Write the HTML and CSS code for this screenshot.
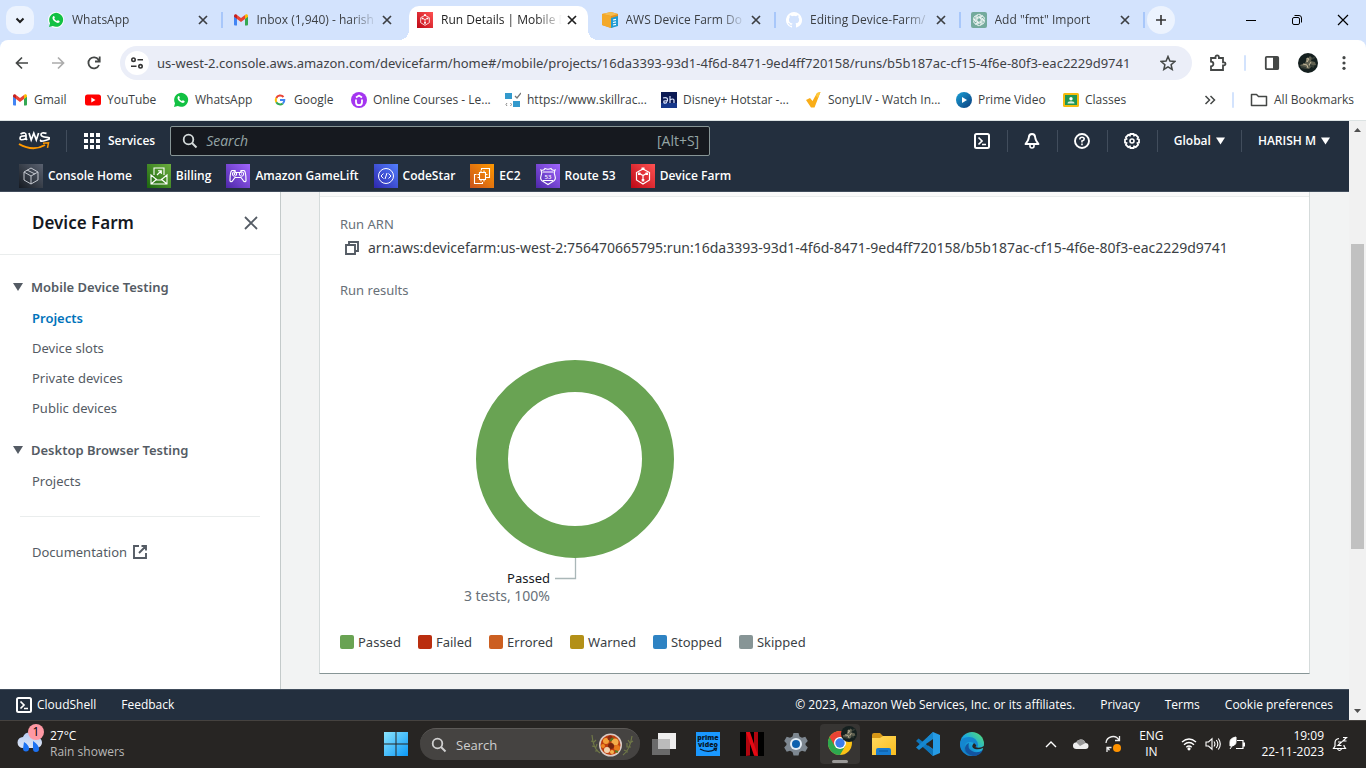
FILE: index.html
```html
<!DOCTYPE html>
<html lang="en">
<head>
<meta charset="utf-8">
<meta name="viewport" content="width=device-width, initial-scale=1">
<title>Run Details | Mobile Device Testing</title>
<link rel="stylesheet" href="styles.css">
</head>
<body>
<svg class="defs" aria-hidden="true">
  <defs>
    <linearGradient id="gRed" x1="0" y1="1" x2="1" y2="0"><stop offset="0" stop-color="#bd0816"/><stop offset="1" stop-color="#ff5252"/></linearGradient>
    <linearGradient id="gPurple" x1="0" y1="1" x2="1" y2="0"><stop offset="0" stop-color="#4d27a8"/><stop offset="1" stop-color="#a166ff"/></linearGradient>
    <linearGradient id="gGreen" x1="0" y1="1" x2="1" y2="0"><stop offset="0" stop-color="#1b660f"/><stop offset="1" stop-color="#6cae3e"/></linearGradient>
    <linearGradient id="gBlue" x1="0" y1="1" x2="1" y2="0"><stop offset="0" stop-color="#2e27ad"/><stop offset="1" stop-color="#527fff"/></linearGradient>
    <linearGradient id="gOrange" x1="0" y1="1" x2="1" y2="0"><stop offset="0" stop-color="#c8511b"/><stop offset="1" stop-color="#f90"/></linearGradient>
    <linearGradient id="gDark" x1="0" y1="1" x2="1" y2="0"><stop offset="0" stop-color="#161b22"/><stop offset="1" stop-color="#5a6270"/></linearGradient>
    <linearGradient id="gWin" x1="0" y1="0" x2="1" y2="1"><stop offset="0" stop-color="#8ae4fd"/><stop offset="1" stop-color="#0b99f8"/></linearGradient>
    <linearGradient id="gEdge" x1="0" y1="1" x2="1" y2="0"><stop offset="0" stop-color="#0c59a4"/><stop offset=".5" stop-color="#1ba8e0"/><stop offset="1" stop-color="#5be46a"/></linearGradient>
    <linearGradient id="gFolder" x1="0" y1="0" x2="1" y2="1"><stop offset="0" stop-color="#ffd95e"/><stop offset="1" stop-color="#f9bd1f"/></linearGradient>
    <linearGradient id="gCloud" x1="0" y1="0" x2="0" y2="1"><stop offset="0" stop-color="#b5cdf5"/><stop offset="1" stop-color="#dde4f2"/></linearGradient>
    <linearGradient id="gPrime" x1="0" y1="0" x2="1" y2="1"><stop offset="0" stop-color="#1aa2d8"/><stop offset="1" stop-color="#0b3c7c"/></linearGradient>
    <symbol id="whatsapp" viewBox="0 0 16 16"><path d="M1 15l1-3.800A7 7 0 1 1 4.800 14z" fill="#12c143"/><path d="M5.200 4.200c.5-.5 1-.3 1.200.2l.4 1c.1.500-.4.800-.6 1.100.6 1.200 1.400 1.900 2.700 2.500.4-.3.700-1 1.200-.8l1.300.7c.5.300.2 1.200-.3 1.600-1 .8-2.700.3-4.300-.9-1.500-1.200-2.400-2.700-2.300-3.900 0-.6.300-1.100.7-1.500z" fill="#fff"/></symbol>
    <symbol id="gmail" viewBox="0 0 16 16"><path d="M1 4v8.500a1 1 0 0 0 1 1h2V6.500z" fill="#4285f4"/><path d="M15 4v8.500a1 1 0 0 1-1 1h-2V6.500z" fill="#34a853"/><path d="M12 3.500V7l3-2.200V4c0-1.500-1.700-2.200-2.700-1.300z" fill="#fbbc04"/><path d="M4 7V3l4 3 4-3v4l-4 3z" fill="#ea4335"/><path d="M1 4c0-1.500 1.700-2.200 2.700-1.300L4 3v4L1 4.800z" fill="#c5221f"/></symbol>
    <symbol id="close" viewBox="0 0 16 16"><path d="M4 4l8 8M12 4l-8 8" stroke="currentColor" stroke-width="1.700" fill="none"/></symbol>
    <symbol id="farm" viewBox="0 0 24 24"><path d="M0 0h24v24H0z" fill="url(#gRed)"/><path d="M12 5l6.500 3.500v7.500L12 20l-6.500-4V8.500zM8.500 9.500l3.500 2 3.500-2M12 11.500v4.500" fill="none" stroke="#fff" stroke-width="1.200"/><path d="M10.500 3.500h3v2.500h-3zM7 8.500h2.500v2.500H7zM14.500 8.500H17v2.500h-2.500zM10.700 15h2.600v2.500h-2.600z" fill="#fff"/></symbol>
    <symbol id="shell" viewBox="0 0 16 16"><rect x="1" y="1" width="14" height="14" rx="1.500" fill="none" stroke="currentColor" stroke-width="2"/><path d="M4.500 4.500L8 8l-3.500 3.500M8 11.500h4" fill="none" stroke="currentColor" stroke-width="1.700"/></symbol>
    <symbol id="avatar" viewBox="0 0 20 20"><circle cx="10" cy="10" r="10" fill="#15201f"/><path d="M2 12l5-2 2-4 3-3 2 2-1 3 4 1 1 3-4 1-3 3-5-1-3-1z" fill="#606151"/><path d="M9 5l2 1-2 3zM5 11l4 1 1 3M13 9l-2 3 3 1" stroke="#c3b79a" fill="none"/><path d="M3 14l5 1M14 6l3-2M12 12l4 2" stroke="#343c35" stroke-width="2"/></symbol>
    <symbol id="caret" viewBox="0 0 10 8"><path d="M0 0h10L5 8z" fill="currentColor"/></symbol>
    <symbol id="search" viewBox="0 0 16 16"><circle cx="6.500" cy="6.500" r="4.800" fill="none" stroke="currentColor" stroke-width="1.800"/><path d="M10 10l4.500 4.500" stroke="currentColor" stroke-width="2"/></symbol>
  </defs>
</svg>

<header class="browser">
  <div class="tabstrip">
    <button class="round-btn tab-search" aria-label="Search tabs"><svg viewBox="0 0 16 16" width="16" height="16"><path d="M4.500 6.500L8 10l3.500-3.500" fill="none" stroke="#1f1f1f" stroke-width="2"/></svg></button>
    <div class="tabs">
      <div class="tab"><div class="tab-body"><svg class="ic16"><circle cx="8" cy="8" r="8" fill="#fff"/><use href="#whatsapp"/></svg><span class="tab-title">WhatsApp</span><button class="tab-close" aria-label="Close WhatsApp"><svg class="ic16"><use href="#close"/></svg></button></div></div>
      <div class="tab no-sep"><div class="tab-body"><svg class="ic16"><use href="#gmail"/></svg><span class="tab-title">Inbox (1,940) - harish</span><button class="tab-close" aria-label="Close Inbox"><svg class="ic16"><use href="#close"/></svg></button></div></div>
      <div class="tab active no-sep"><div class="tab-body"><svg class="ic16"><use href="#farm"/></svg><span class="tab-title">Run Details | Mobile D</span><button class="tab-close" aria-label="Close Run Details"><svg class="ic16"><use href="#close"/></svg></button></div></div>
      <div class="tab"><div class="tab-body"><svg class="ic16" viewBox="0 0 16 16"><path d="M0 2l9-2 7 2v11l-7 3-9-3z" fill="#e8911c"/><path d="M0 2l9-2 7 2-7 2z" fill="#f6bd4f"/><path d="M9 4v12l-9-3V2z" fill="#f3a92a"/><path d="M9 6l7-2v10l-7 2z" fill="#1e9bd3"/><path d="M11 8l3-.6M11 10.500l3-.6M11 13l3-.6" stroke="#fff" stroke-width="1.200"/></svg><span class="tab-title">AWS Device Farm Do</span><button class="tab-close" aria-label="Close AWS Device Farm"><svg class="ic16"><use href="#close"/></svg></button></div></div>
      <div class="tab"><div class="tab-body"><svg class="ic16" viewBox="0 0 16 16"><path fill="#fff" d="M8 0a8 8 0 0 0-2.530 15.590c.4.070.55-.17.550-.38v-1.490c-2.010.37-2.530-.49-2.690-.94-.09-.23-.48-.94-.82-1.130-.28-.15-.68-.52-.01-.53.630-.01 1.080.580 1.230.820.720 1.210 1.870.870 2.330.660.070-.52.280-.87.510-1.070-1.780-.2-3.640-.89-3.640-3.950 0-.87.310-1.590.820-2.150-.08-.2-.36-1.020.080-2.120 0 0 .67-.21 2.200.820a7.500 7.500 0 0 1 4 0c1.530-1.040 2.200-.82 2.200-.82.440 1.100.160 1.920.080 2.120.510.560.820 1.270.820 2.150 0 3.070-1.870 3.750-3.650 3.950.290.250.540.730.540 1.480v2.200c0 .21.150.46.550.38A8 8 0 0 0 8 0z"/></svg><span class="tab-title">Editing Device-Farm/</span><button class="tab-close" aria-label="Close Editing Device-Farm"><svg class="ic16"><use href="#close"/></svg></button></div></div>
      <div class="tab"><div class="tab-body"><svg class="ic16" viewBox="0 0 16 16"><rect width="16" height="16" rx="2" fill="#74aa9c"/><g fill="none" stroke="#fff" stroke-width=".8"><path id="petal" d="M6 8.800V4.600a2.200 2.200 0 0 1 4.100-1.200M6 5.700L9.300 3.800a2.200 2.200 0 0 1 2.700.3"/><use href="#petal" transform="rotate(60 8 8)"/><use href="#petal" transform="rotate(120 8 8)"/><use href="#petal" transform="rotate(180 8 8)"/><use href="#petal" transform="rotate(240 8 8)"/><use href="#petal" transform="rotate(300 8 8)"/></g></svg><span class="tab-title">Add "fmt" Import</span><button class="tab-close" aria-label="Close Add fmt Import"><svg class="ic16"><use href="#close"/></svg></button></div></div>
    </div>
    <button class="round-btn new-tab" aria-label="New tab"><svg class="ic16" viewBox="0 0 16 16"><path d="M8 3v10M3 8h10" stroke="#333" stroke-width="1.600"/></svg></button>
    <div class="window-controls">
      <button aria-label="Minimize"><svg width="12" height="12"><path d="M1 6.500h10" stroke="#000"/></svg></button>
      <button aria-label="Restore"><svg width="12" height="12" fill="none" stroke="#000"><rect x="1.500" y="3.500" width="7" height="7" rx="1.500"/><path d="M3.500 1.500H8a2.500 2.500 0 0 1 2.500 2.500v4.500"/></svg></button>
      <button aria-label="Close window"><svg width="12" height="12"><path d="M1 1l10 10M11 1L1 11" stroke="#000" stroke-width="1.200"/></svg></button>
    </div>
  </div>

  <div class="toolbar">
    <button class="tool" aria-label="Back"><svg class="ic16" viewBox="0 0 16 16"><path d="M14 8H3M8 2.500L2.500 8 8 13.500" fill="none" stroke="#444746" stroke-width="1.700"/></svg></button>
    <button class="tool" aria-label="Forward"><svg class="ic16" viewBox="0 0 16 16"><path d="M2 8h11M8 2.500L13.500 8 8 13.500" fill="none" stroke="#acacac" stroke-width="1.700"/></svg></button>
    <button class="tool" aria-label="Reload"><svg class="ic16" viewBox="0 0 16 16"><path d="M13 10a5.500 5.500 0 1 1-.5-5.200l1 1.200M13.700 1.500v5H9" fill="none" stroke="#444746" stroke-width="1.800"/></svg></button>
    <div class="omnibox">
      <button class="site-info" aria-label="View site information"><svg class="ic16" viewBox="0 0 16 16" fill="none" stroke="#333" stroke-width="1.600"><circle cx="4.500" cy="4.700" r="1.700"/><path d="M8.500 4.700H14M2 11.300h5.500"/><circle cx="11.500" cy="11.300" r="1.700"/></svg></button>
      <input class="url" type="text" aria-label="Address" value="us-west-2.console.aws.amazon.com/devicefarm/home#/mobile/projects/16da3393-93d1-4f6d-8471-9ed4ff720158/runs/b5b187ac-cf15-4f6e-80f3-eac2229d9741">
      <button class="star" aria-label="Bookmark this tab"><svg class="ic16" viewBox="0 0 16 16"><path d="M8 1.500l1.900 4.600 4.900.4-3.700 3.200 1.100 4.800L8 11.900l-4.200 2.600 1.100-4.800L1.200 6.500l4.900-.4z" fill="none" stroke="#444746" stroke-width="1.500"/></svg></button>
    </div>
    <div class="tool-end">
      <button class="tool" aria-label="Extensions"><svg width="18" height="18" viewBox="0 0 18 18"><path d="M2 4h4.500V3a1.700 1.700 0 0 1 3.400 0v1H14v4.300h1a1.500 1.500 0 0 1 0 3h-1V16H2v-3.600a2.400 2.400 0 0 0 0-4.800z" fill="none" stroke="#444746" stroke-width="1.800"/></svg></button>
      <span class="divider"></span>
      <button class="tool" aria-label="Side panel"><svg class="ic16" viewBox="0 0 16 16"><rect x="1.800" y="1.800" width="12.400" height="12.400" rx="1" fill="none" stroke="#444746" stroke-width="1.800"/><path d="M9 2h5v12H9z" fill="#444746"/></svg></button>
      <button class="tool" aria-label="Profile"><svg width="20" height="20"><use href="#avatar"/></svg></button>
      <button class="tool" aria-label="Menu"><svg class="ic16" viewBox="0 0 16 16" fill="#444746"><circle cx="8" cy="2.700" r="1.600"/><circle cx="8" cy="8" r="1.600"/><circle cx="8" cy="13.300" r="1.600"/></svg></button>
    </div>
  </div>

  <nav class="bookmarks" aria-label="Bookmarks">
    <div class="bookmark-list">
      <a href="#"><svg class="ic16"><use href="#gmail"/></svg>Gmail</a>
      <a href="#"><svg class="ic16" viewBox="0 0 16 16"><rect y="2.500" width="16" height="11" rx="2.500" fill="#f00"/><path d="M6.300 5.500v5l4.200-2.500z" fill="#fff"/></svg>YouTube</a>
      <a href="#"><svg class="ic16"><use href="#whatsapp"/></svg>WhatsApp</a>
      <a href="#"><svg class="ic16" viewBox="0 0 16 16" fill="none" stroke-width="2"><path d="M11.500 5A4.300 4.300 0 0 0 4.300 6" stroke="#ea4335"/><path d="M4.300 6a4.300 4.300 0 0 0 0 4.200" stroke="#fbbc05"/><path d="M4.300 10.200a4.300 4.300 0 0 0 6.500 1.200" stroke="#34a853"/><path d="M10.800 11.400A4.300 4.300 0 0 0 12.300 8H8" stroke="#4285f4"/></svg>Google</a>
      <a href="#"><svg class="ic16" viewBox="0 0 16 16"><circle cx="8" cy="8" r="8" fill="#a435f0"/><path d="M5 7.500v2.700a3 3 0 0 0 6 0V7.500M5 5.500l3-2 3 2" fill="none" stroke="#fff" stroke-width="1.800"/></svg>Online Courses - Le...</a>
      <a href="#"><svg class="ic16" viewBox="0 0 16 16"><path d="M0 1h7v6H0zM8 9h7v6H8z" fill="#3399cc"/><path d="M10 4l2 2 4-5" stroke="#777" stroke-width="1.300" fill="none"/><path d="M2 11l-1 1.500L2 14M5.500 11l1 1.500-1 1.500" stroke="#888" fill="none"/></svg>https://www.skillrac...</a>
      <a href="#"><svg class="ic16" viewBox="0 0 16 16"><path d="M0 0h16v16H0z" fill="#0c1b55"/><path d="M0 11h16v5H0z" fill="#16378a"/><path d="M2 6q4-1 4.500 1T5 11q-3 .5-2-2l4-.4M9 4v7M9 8q3-2 4 0v3" fill="none" stroke="#dce5ff" stroke-width="1.200"/></svg>Disney+ Hotstar -...</a>
      <a href="#"><svg class="ic16" viewBox="0 0 16 16"><path d="M0 8l4-2 2.500 3L11 1l3.500-1-6 15.500H5z" fill="#f9ad18"/><path d="M11 1l3.500-1L12 6l-2-2z" fill="#fdc93c"/></svg>SonyLIV - Watch In...</a>
      <a href="#"><svg class="ic16" viewBox="0 0 16 16"><circle cx="8" cy="8" r="8" fill="url(#gPrime)"/><path d="M6 5v6l5-3z" fill="#fff"/></svg>Prime Video</a>
      <a href="#"><svg class="ic16" viewBox="0 0 16 16"><rect y="1" width="16" height="14" rx="1.500" fill="#f6bb10"/><path d="M2 3h12v10H2z" fill="#219653"/><circle cx="8" cy="6.700" r="1.700" fill="#fff"/><path d="M4.500 11.500q0-2.300 3.500-2.300t3.500 2.300z" fill="#d8f0df"/></svg>Classes</a>
    </div>
    <div class="bookmark-end">
      <button class="more" aria-label="More bookmarks"><svg width="12" height="12" viewBox="0 0 12 12"><path d="M1.500 2L5.500 6l-4 4M6.500 2l4 4-4 4" fill="none" stroke="#444746" stroke-width="1.500"/></svg></button>
      <span class="divider"></span>
      <a href="#"><svg width="18" height="16" viewBox="0 0 18 16"><path d="M1.500 2.500h5l2 2h8v9h-15z" fill="none" stroke="#444746" stroke-width="1.500" stroke-linejoin="round"/></svg>All Bookmarks</a>
    </div>
  </nav>
</header>

<div class="viewport">
  <div class="page">
    <header class="aws-header">
      <div class="aws-row">
        <a class="aws-logo" href="#" aria-label="AWS home"><svg width="32" height="22" viewBox="0 0 32 22"><g fill="none" stroke="#fff" stroke-width="1.700"><path d="M2.500 4Q8 1.500 8 5v3.500l1 1.500M8 6Q2 5.500 2 8.300T8 8.500"/><path d="M11 3l2.200 7L15.800 3.200 18.300 10 20.600 3"/><path d="M28.500 3.400q-5.500-1.300-5.500 1t6 3-1 2.800-5-.4"/></g><path d="M1 14q14 8 26 1" fill="none" stroke="#f90" stroke-width="2"/><path d="M25 13.300l5.500-.5-1 5" fill="none" stroke="#f90" stroke-width="1.500"/></svg></a>
        <button class="services"><svg class="ic16" viewBox="0 0 16 16" fill="#fff"><path d="M0 0h4v4H0zM6 0h4v4H6zM12 0h4v4h-4zM0 6h4v4H0zM6 6h4v4H6zM12 6h4v4h-4zM0 12h4v4H0zM6 12h4v4H6zM12 12h4v4h-4z"/></svg>Services</button>
        <label class="aws-search"><svg class="ic16"><use href="#search"/></svg><input type="text" placeholder="Search" aria-label="Search"><span>[Alt+S]</span></label>
        <div class="aws-tools">
          <button aria-label="CloudShell"><svg class="ic16"><use href="#shell"/></svg></button>
          <button aria-label="Notifications"><svg class="ic16" viewBox="0 0 16 16"><path d="M8 1Q5 1 4.800 4.500 4.700 7 1.500 11h13Q11.300 7 11.200 4.500 11 1 8 1z" fill="none" stroke="#fff" stroke-width="1.900" stroke-linejoin="round"/><path d="M6 11.500v1.500a2 2 0 0 0 4 0v-1.500" fill="none" stroke="#fff" stroke-width="1.600"/></svg></button>
          <button aria-label="Help"><svg class="ic16" viewBox="0 0 16 16"><circle cx="8" cy="8" r="7" fill="none" stroke="#fff" stroke-width="1.900"/><path d="M5.800 6.500q0-2.200 2.200-2.200t2.200 1.800Q10.200 7.500 8 8v1.500M8 10.600v1.700" fill="none" stroke="#fff" stroke-width="1.600"/></svg></button>
          <button aria-label="Settings"><svg class="ic16" viewBox="0 0 16 16"><path d="M6.400 1h3.200l.5 1.500 1.600-.6L14.100 4.300l-.6 1.600L15 6.400v3.200l-1.500.5.6 1.600-2.400 2.400-1.600-.6L9.600 15H6.400l-.5-1.500-1.600.6-2.400-2.400.6-1.600L1 9.600V6.400l1.500-.5-.6-1.600 2.400-2.400 1.600.6z" fill="none" stroke="#fff" stroke-width="1.800"/><circle cx="8" cy="8" r="2" fill="none" stroke="#fff" stroke-width="1.600"/></svg></button>
          <button class="menu">Global<svg width="9" height="8"><use href="#caret"/></svg></button>
          <button class="menu user">HARISH M<svg width="9" height="8"><use href="#caret"/></svg></button>
        </div>
      </div>
      <nav class="favorites" aria-label="Favorites">
        <a href="#"><svg class="ic24" viewBox="0 0 24 24"><path d="M0 0h24v24H0z" fill="url(#gDark)"/><path d="M12 4l7 4v8l-7 4-7-4V8zM5 8l7 4 7-4M12 12v8M8 6l8 4" fill="none" stroke="#c4c8cf" stroke-width="1"/></svg>Console Home</a>
        <a href="#"><svg class="ic24" viewBox="0 0 24 24"><path d="M0 0h24v24H0z" fill="url(#gGreen)"/><path d="M7 11V4h10v7M4 11v9h16v-9l-6 5h-4zM4 20l6-5M20 20l-6-5M10 11l4-4M11 6.700h3.300V10" fill="none" stroke="#fff" stroke-width="1.100"/></svg>Billing</a>
        <a href="#"><svg class="ic24" viewBox="0 0 24 24"><path d="M0 0h24v24H0z" fill="url(#gPurple)"/><path d="M9 6.500H6q-2 1-2 10 0 1.500 2 1l3-4h6l3 4q2 .5 2-1 0-9-2-10h-3v2H9z" fill="none" stroke="#fff" stroke-width="1.200"/><circle cx="8.500" cy="10" r="2.200" fill="none" stroke="#fff"/><circle cx="15.500" cy="10" r="2.200" fill="none" stroke="#fff"/><path d="M8.500 9v2M7.500 10h2M15 10h1" stroke="#fff"/></svg>Amazon GameLift</a>
        <a href="#"><svg class="ic24" viewBox="0 0 24 24"><path d="M0 0h24v24H0z" fill="url(#gBlue)"/><circle cx="12" cy="12" r="7.500" fill="none" stroke="#fff"/><path d="M9.500 9.500L7 12l2.500 2.500M14.500 9.500L17 12l-2.500 2.500M13 9l-2 6" fill="none" stroke="#fff"/></svg>CodeStar</a>
        <a href="#"><svg class="ic24" viewBox="0 0 24 24"><path d="M0 0h24v24H0z" fill="url(#gOrange)"/><path d="M9.500 8.500h6v7h-6zM11 8.500v-2M14 8.500v-2M11 17.500v-2M14 17.500v-2M15.500 10.500h2M15.500 13.500h2M7.500 10.500h2M7.500 13.500h2M11.500 6V4.500h8v9h-2M12.500 18v1.500h-8v-9h2" fill="none" stroke="#fff" stroke-width="1.100"/></svg>EC2</a>
        <a href="#"><svg class="ic24" viewBox="0 0 24 24"><path d="M0 0h24v24H0z" fill="url(#gPurple)"/><path d="M5 6q3 1 4-1.500 3 1.500 6 0 1 2.500 4 1.500-1.500 3 0 6 1.500 4-3 6l-4 2.500L8 18q-4.500-2-3-6 1.500-3 0-6zM6.500 8h11M7 16.500h10" fill="none" stroke="#fff" stroke-width="1.100"/><text x="12" y="14.500" font-size="6" text-anchor="middle" fill="#fff">53</text></svg>Route 53</a>
        <a href="#"><svg class="ic24"><use href="#farm"/></svg>Device Farm</a>
      </nav>
    </header>

    <div class="content">
      <aside class="sidebar">
        <div class="side-head"><h2>Device Farm</h2><button aria-label="Close navigation"><svg width="14" height="14"><path d="M1 1l12 12M13 1L1 13" stroke="#545b64" stroke-width="1.800"/></svg></button></div>
        <nav class="side-nav" aria-label="Device Farm">
          <section>
            <button class="group"><svg width="10" height="8"><use href="#caret"/></svg>Mobile Device Testing</button>
            <a class="current" href="#">Projects</a>
            <a href="#">Device slots</a>
            <a href="#">Private devices</a>
            <a href="#">Public devices</a>
          </section>
          <section>
            <button class="group"><svg width="10" height="8"><use href="#caret"/></svg>Desktop Browser Testing</button>
            <a href="#">Projects</a>
          </section>
          <hr>
          <a class="docs" href="#">Documentation<svg width="16" height="16" viewBox="0 0 16 16"><path d="M7 2H2v12h12V9M9.500 2H14v4.500M14 2L7 9" fill="none" stroke="#545b64" stroke-width="1.900"/></svg></a>
        </nav>
      </aside>

      <main class="main">
        <article class="panel">
          <div class="panel-head"></div>
          <div class="panel-body">
            <h3>Run ARN</h3>
            <div class="arn"><button aria-label="Copy ARN"><svg width="14" height="14" viewBox="0 0 14 14"><path d="M1 4h9v9H1zM4 3.500V1h9v9h-2.500" fill="none" stroke="#545b64" stroke-width="1.900"/></svg></button><span>arn:aws:devicefarm:us-west-2:756470665795:run:16da3393-93d1-4f6d-8471-9ed4ff720158/b5b187ac-cf15-4f6e-80f3-eac2229d9741</span></div>
            <h3>Run results</h3>
            <svg class="chart" viewBox="0 0 470 284" role="img" aria-label="Passed, 3 tests, 100%">
              <circle cx="235" cy="133" r="83" fill="none" stroke="#69a353" stroke-width="32"/>
              <path d="M235.500 232v20.500H215" fill="none" stroke="#aab7b8" stroke-width="1.300"/>
              <text class="slice-name" x="210" y="257" text-anchor="end">Passed</text>
              <text class="slice-value" x="210" y="275" text-anchor="end">3 tests, 100%</text>
            </svg>
            <ul class="legend">
              <li class="passed">Passed</li>
              <li class="failed">Failed</li>
              <li class="errored">Errored</li>
              <li class="warned">Warned</li>
              <li class="stopped">Stopped</li>
              <li class="skipped">Skipped</li>
            </ul>
          </div>
        </article>
      </main>
    </div>

    <footer class="aws-footer">
      <a class="shell" href="#"><svg class="ic16"><use href="#shell"/></svg>CloudShell</a>
      <a href="#">Feedback</a>
      <span class="copyright">© 2023, Amazon Web Services, Inc. or its affiliates.</span>
      <a href="#">Privacy</a>
      <a href="#">Terms</a>
      <a href="#">Cookie preferences</a>
    </footer>
  </div>
  <div class="scrollbar" aria-hidden="true">
    <svg width="7" height="4"><path d="M0 4h7L3.500 0z" fill="#505050"/></svg>
    <div class="track"><div class="thumb"></div></div>
    <svg width="7" height="4"><path d="M0 0h7L3.500 4z" fill="#505050"/></svg>
  </div>
</div>

<footer class="taskbar">
  <button class="weather">
    <svg width="28" height="32" viewBox="0 0 28 32"><path d="M7 24a5.500 5.500 0 0 1 0-11 7 7 0 0 1 13 0 5.500 5.500 0 0 1 1 11z" fill="url(#gCloud)"/><path d="M8 18q5 3 5 6.500a3 3 0 0 1-6 0zM17 17q6 4 6 8a3 3 0 0 1-6 0z" fill="#1c72f2"/><circle cx="20" cy="8" r="8" fill="#ff99a4"/><text x="20" y="12" font-size="12" text-anchor="middle">1</text></svg>
    <span class="weather-text"><span>27°C</span><span class="dim">Rain showers</span></span>
  </button>
  <div class="apps">
    <button class="app" aria-label="Start"><svg width="24" height="24"><path d="M0 0h11.500v11.500H0zM12.500 0H24v11.500H12.500zM0 12.500h11.500V24H0zM12.500 12.500H24V24H12.500z" fill="url(#gWin)"/></svg></button>
    <label class="task-search"><svg class="ic16"><use href="#search"/></svg><input type="text" placeholder="Search" aria-label="Search Windows">
      <svg width="44" height="24" viewBox="0 0 44 24"><g fill="none" stroke="#6f7747" stroke-width="1.200"><path d="M2 2q1 14 8 18M1 8l3 1 2-2M2 13l4 1 1-3M5 18l3-1M42 3q-2 14-9 19M43 8l-3 2-2-3M41 14l-4 0 0-4M38 19l-4-2"/></g><circle cx="20.500" cy="12" r="11.500" fill="#dbccc7"/><circle cx="20.500" cy="12" r="10" fill="#c0400f"/><circle cx="16" cy="8" r="3" fill="#f3a03a"/><circle cx="25" cy="9" r="3.500" fill="#f4ad4a"/><circle cx="27" cy="15" r="3" fill="#e87a1d"/><circle cx="21" cy="13" r="3" fill="#76260f"/><circle cx="17" cy="17" r="3" fill="#f1d2ae"/><circle cx="20" cy="5" r="2.500" fill="#8c2d12"/><circle cx="13" cy="13" r="2" fill="#ef8622"/><circle cx="22" cy="19" r="2" fill="#f2b14e"/><path d="M20 8l3-3M25 18l3 1" stroke="#567a24" stroke-width="2"/></svg></label>
    <button class="app" aria-label="Task view"><svg class="ic24"><path d="M6 1h18v16H6z" fill="#eee"/><path d="M0 7h18v16H0z" fill="#777" fill-opacity=".85"/><path d="M6 7h12v10H6z" fill="#bbb"/></svg></button>
    <button class="app" aria-label="Prime Video"><svg class="ic24" viewBox="0 0 24 24"><path d="M0 0h24v24H0z" fill="#1a98ff"/><g font-size="7" font-weight="800" text-anchor="middle" fill="#07172b"><text x="12" y="8">prime</text><text x="12" y="15">video</text></g><path d="M4 17q8 4.500 15 .5M17.500 16.500l3-.2-.8 2.700" stroke="#07172b" fill="none" stroke-width="1.300"/></svg></button>
    <button class="app" aria-label="Netflix"><svg class="ic24"><path d="M0 0h24v24H0z"/><path d="M6 0h4v23.500l-4 .5zM14 0h4v24l-4-.5z" fill="#b1060f"/><path d="M6 0h4l8 24-4-.5z" fill="#e50914"/></svg></button>
    <button class="app" aria-label="Settings"><svg class="ic24" viewBox="0 0 24 24"><path d="M9.500 1h5l1 3.500 2.500 1.300 3.300-1 2.500 4.200-2.300 2.500v1.500l2.300 2.500-2.500 4.200-3.300-1-2.500 1.300-1 3.500h-5l-1-3.500L6 18.700l-3.300 1L.2 15.500 2.500 13v-1.500L.2 9l2.500-4.200 3.300 1 2.500-1.300z" fill="#7d8790"/><circle cx="12" cy="12" r="6" fill="#e3edf5"/><circle cx="12" cy="12" r="4" fill="#0d61ae"/></svg></button>
    <button class="app running" aria-label="Google Chrome"><svg width="30" height="32" viewBox="0 0 30 32"><circle cx="12" cy="17" r="12" fill="#fbc116"/><path d="M12 17L1.600 11A12 12 0 0 0 12 29l5.200-9z" fill="#2da94f"/><path d="M12 17V11h10.400A12 12 0 0 0 1.600 11l5.200 9z" fill="#e94335"/><circle cx="12" cy="17" r="6" fill="#fff"/><circle cx="12" cy="17" r="4.700" fill="#3b7ded"/><svg x="13" y="0" width="16" height="16"><use href="#avatar"/></svg></svg></button>
    <button class="app" aria-label="File Explorer"><svg class="ic24"><path d="M0 3q0-2 2-2h6l3 3h11q2 0 2 2v6H0z" fill="#d69717"/><path d="M0 6h8l3-2h13v19H0z" fill="url(#gFolder)"/><path d="M4 23v-5q0-2 2-2h11q2 0 2 2v5z" fill="#167bd0"/><path d="M7 19h9" stroke="#0a5699"/></svg></button>
    <button class="app" aria-label="Visual Studio Code"><svg class="ic24"><path d="M17 0l7 3v18l-7 3-5-5V5z" fill="#259be5"/><path d="M17 0v24L0 9l2.500-2.500L17 17.500" fill="#0e74b9"/><path d="M17 0v7L3 18 0 15.500z" fill="#1687cf"/><path d="M17 7v10l-7-5z" fill="#272523"/></svg></button>
    <button class="app" aria-label="Microsoft Edge"><svg class="ic24"><circle cx="12" cy="12" r="12" fill="url(#gEdge)"/><path d="M0 12Q1 5 9 5t9 8q0 3-3 3 1-6-5-6-7 0-6 8 2 5 8 6A12 12 0 0 1 0 12z" fill="#1486cf"/><path d="M9 11q-2 5 3 8t11-1q-3 6-10 6Q5 22 5 16q1-4 4-5z" fill="#1354a0"/><path d="M14 11q-4 4 1 6 4 1 8-1l1 1v-3q-4 3-9 1 3-1-1-4z" fill="#272523"/></svg></button>
  </div>
  <div class="tray">
    <button aria-label="Show hidden icons"><svg width="12" height="12"><path d="M1 9l5-5 5 5" fill="none" stroke="#fff" stroke-width="1.400"/></svg></button>
    <button aria-label="OneDrive"><svg class="ic16" viewBox="0 0 16 16"><path d="M3.500 13a3.400 3.400 0 0 1-.3-6.800 5 5 0 0 1 9.300.8 3 3 0 0 1 0 6z" fill="#eee"/><path d="M3.200 6.200a5 5 0 0 1 9.300.8L7 10z" fill="#999"/></svg></button>
    <button aria-label="Windows Update"><svg width="16" height="18" viewBox="0 0 16 18"><path d="M1 8a7 7 0 0 1 13-3M14.500 1v4.500H10M2 17v-4.500h4.500M2.500 13l2 2.200" fill="none" stroke="#eee" stroke-width="1.300"/><circle cx="12" cy="13" r="4" fill="#ff9300"/></svg></button>
    <button class="lang">ENG<br>IN</button>
    <button class="status" aria-label="Network, volume and battery">
      <svg class="ic16" viewBox="0 0 16 16"><path d="M1 6q7-6 14 0M3 8.700q5-4.500 10 0M5.300 11.200q2.700-2.300 5.400 0" fill="none" stroke="#fff" stroke-width="1.400"/><circle cx="8" cy="12.800" r="1.600" fill="#fff"/></svg>
      <svg class="ic16" viewBox="0 0 16 16"><path d="M1 6h2.500L7 2.800v10.400L3.500 10H1zM9 5.500q1.800 2.500 0 5M11.300 4q3 4 0 8M13.300 2.500q4 5.500 0 11" fill="none" stroke="#fff" stroke-width="1.100"/></svg>
      <svg class="ic16" viewBox="0 0 16 16"><path d="M8 4.500h6v8H7M15 7v3M14 7h1.500v3H14" fill="none" stroke="#fff" stroke-width="1.200"/><path d="M1 10V6q0-4 6-5v5q0 4-6 4zM1 13l4-6" fill="#fff" stroke="#fff"/></svg>
    </button>
    <button class="clock">19:09<br>22-11-2023</button>
    <button aria-label="Notifications"><svg class="ic16" viewBox="0 0 16 16"><path d="M7 2.500Q3 3 3 7v3l-1.500 2.500h12L12 10V9M5.500 13q2 3 4 0M6 6h3.500L6 9.500h3.500M11 1.500h3.500L11 5h3.500" fill="none" stroke="#fff" stroke-width="1.200"/></svg></button>
  </div>
</footer>
</body>
</html>
```
FILE: styles.css
```css
* { box-sizing: border-box; }

body {
  margin: 0;
  height: 100vh;
  display: flex;
  flex-direction: column;
  overflow: hidden;
  font: 12px/16px "Open Sans", "Noto Sans", sans-serif;
  color: #16191f;
  background: #fff;
}

button, input { font: inherit; color: inherit; border: 0; padding: 0; margin: 0; background: none; }
input { min-width: 0; outline: 0; }
a { color: inherit; text-decoration: none; }
svg { display: block; flex: none; }
h2, h3, ul { margin: 0; padding: 0; }

.defs { position: absolute; width: 0; height: 0; }
.ic16 { width: 16px; height: 16px; }
.ic24 { width: 24px; height: 24px; }

/* Browser frame */
.browser { flex: none; background: #d3e3fd; color: #3c3f43; border-bottom: 1px solid #dce3e3; }

.tabstrip { display: flex; align-items: center; height: 40px; padding-left: 6px; }
.round-btn { flex: none; display: grid; place-items: center; width: 28px; height: 28px; background: #ecf3fe; }
.tab-search { border-radius: 10px; margin-right: 6px; }
.new-tab { border-radius: 50%; }
.tabs { flex: 0 1 1107px; display: flex; min-width: 0; align-self: flex-end; }
.tab { flex: 1; min-width: 0; display: flex; align-items: center; height: 34px; padding-right: 6px; }
.tab::after { content: ""; width: 2px; height: 16px; margin-right: -4px; margin-left: 2px; margin-bottom: 6px; background: #a8c7fa; }
.tab.no-sep::after { background: none; }
.tab-body { position: relative; flex: 1; min-width: 0; display: flex; align-items: center; height: 34px; padding: 0 8px 6px; border-radius: 10px 10px 0 0; }
.active .tab-body { background: #fff; color: #1f1f1f; }
.active .tab-body::before, .active .tab-body::after { content: ""; position: absolute; bottom: 0; width: 10px; height: 10px; }
.active .tab-body::before { left: -10px; background: radial-gradient(circle at 0 0, transparent 10px, #fff 10px); }
.active .tab-body::after { right: -10px; background: radial-gradient(circle at 100% 0, transparent 10px, #fff 10px); }
.tab-title { flex: 1; min-width: 0; margin-left: 8px; overflow: hidden; white-space: nowrap; -webkit-mask-image: linear-gradient(90deg, #000 calc(100% - 28px), transparent calc(100% - 2px)); mask-image: linear-gradient(90deg, #000 calc(100% - 28px), transparent calc(100% - 2px)); }
.tab-close { display: grid; place-items: center; }
.window-controls { margin-left: auto; display: flex; align-self: stretch; }
.window-controls button { width: 46px; display: grid; place-items: center; }

.toolbar { display: flex; align-items: center; height: 46px; padding: 0 4px; background: #fff; border-radius: 8px 8px 0 0; }
.tool { flex: none; width: 36px; height: 36px; display: grid; place-items: center; }
.omnibox { flex: 1; min-width: 0; display: flex; align-items: center; height: 34px; margin: 0 8px; padding: 0 16px 0 5px; border-radius: 17px; background: #ebeef8; }
.site-info { flex: none; width: 24px; height: 24px; display: grid; place-items: center; border-radius: 50%; background: #fff; }
.url { flex: 1; margin: 0 4px 0 8px; font-family: "Noto Sans", sans-serif; font-size: 13px; color: #3f4246; }
.tool-end { display: flex; align-items: center; }
.divider { flex: none; width: 2px; height: 16px; margin: 0 8px; background: #d3e3fd; border-radius: 1px; }

.bookmarks { display: flex; align-items: center; height: 34px; padding: 0 12px 6px; background: #fff; white-space: nowrap; }
.bookmark-list { display: grid; grid-template-columns: 73px 88px 99px 79px 154px 156px 145px 150px 107px auto; }
.bookmarks a { display: flex; align-items: center; gap: 6px; }
.bookmark-end { margin-left: auto; display: flex; align-items: center; }
.bookmark-end .divider { margin: 0 16px; }

/* Page area */
.viewport { flex: 1; min-height: 0; display: flex; }
.page { flex: 1; min-width: 0; display: flex; flex-direction: column; }
.scrollbar { flex: none; width: 17px; padding: 7px 0; display: flex; flex-direction: column; align-items: center; gap: 7px; background: #f1f1f1; }
.track { flex: 1; display: flex; flex-direction: column; padding: 105px 0 153px; }
.thumb { flex: 1; width: 13px; background: #c1c1c1; }

.aws-header { flex: none; background: #232f3e; color: #fff; font-weight: 600; border-bottom: 1px solid #414d5c; }
.aws-row { display: flex; align-items: center; height: 40px; }
.aws-logo { width: 67px; height: 22px; padding-left: 18px; border-right: 1px solid #414d5c; }
.services { display: flex; align-items: center; gap: 8px; padding: 0 15px 0 17px; }
.aws-search { flex: 0 1 540px; min-width: 0; display: flex; align-items: center; gap: 8px; height: 30px; padding: 0 10px 0 11px; background: #16191f; border: 1px solid #879596; border-radius: 2px; font-size: 14px; font-weight: 400; color: #95a5a6; }
.aws-search .ic16 { color: #d5dbdb; }
.aws-search input { flex: 1; }
.aws-search input::placeholder { color: #95a5a6; font-style: italic; opacity: 1; }
.aws-tools { margin-left: auto; display: flex; align-items: center; }
.aws-tools button { width: 50px; height: 22px; display: flex; align-items: center; justify-content: center; gap: 5px; border-right: 1px solid #414d5c; white-space: nowrap; }
.aws-tools .menu { width: auto; padding: 0 16px; }
.aws-tools .user { border: 0; padding-right: 19px; }
.favorites { display: flex; gap: 15px; height: 30px; padding: 3px 19px; white-space: nowrap; }
.favorites a { display: flex; align-items: center; gap: 5px; height: 24px; }

.content { flex: 1; min-height: 0; display: flex; background: #f2f3f3; font-family: "Noto Sans", sans-serif; }
.sidebar { flex: none; width: 281px; background: #fff; border-right: 1px solid #c4caca; color: #545b64; font-size: 13px; line-height: 20px; }
.side-head { display: flex; align-items: center; justify-content: space-between; height: 63px; padding: 0 22px 0 32px; border-bottom: 1px solid #eaeded; }
.side-head h2 { font-size: 17px; line-height: 24px; font-weight: 600; color: #16191f; }
.side-nav { padding: 22px 20px 0 13px; }
.side-nav section { margin-bottom: 22px; }
.side-nav a { display: block; padding-left: 19px; margin-bottom: 10px; }
.side-nav .current { color: #0073bb; font-weight: 600; }
.group { display: flex; align-items: center; gap: 8px; margin-bottom: 11px; font-weight: 600; }
.side-nav hr { margin: 25px 0 25px 7px; border: 0; border-top: 1px solid #eaeded; }
.side-nav .docs { display: flex; align-items: center; gap: 5px; }

.main { flex: 1; min-width: 0; padding: 0 39px 15px 38px; }
.panel { height: 100%; background: #fff; border: 1px solid #d5dbdb; border-top: 0; border-bottom: 1px solid #879596; font-size: 13px; line-height: 22px; }
.panel-head { height: 5px; background: #fafafa; border-bottom: 1px solid #eaeded; }
.panel-body { padding: 16px 20px 20px; }
.panel h3 { font-size: 13px; font-weight: 400; color: #687078; }
.arn { display: flex; align-items: center; gap: 9px; margin: 2px 0 20px 5px; font-size: 14px; color: #3b3f45; white-space: nowrap; }
.chart { width: 470px; height: 284px; margin-top: 25px; }
.slice-name { fill: #16191f; }
.slice-value { fill: #687078; font-size: 14px; }
.legend { display: flex; flex-wrap: wrap; gap: 17px; margin-top: 21px; list-style: none; color: #3b3f45; }
.legend li { display: flex; align-items: center; gap: 4px; }
.legend li::before { content: ""; width: 14px; height: 14px; border-radius: 2px; background: #69a353; }
.legend .failed::before { background: #ba2e0f; }
.legend .errored::before { background: #cc5f21; }
.legend .warned::before { background: #b39017; }
.legend .stopped::before { background: #2e83c3; }
.legend .skipped::before { background: #879596; }

.aws-footer { flex: none; display: flex; align-items: center; gap: 25px; height: 31px; padding: 0 16px; border-top: 1px solid #414d5c; background: #232f3e; color: #fff; font-weight: 500; white-space: nowrap; }
.shell { display: flex; align-items: center; gap: 5px; }
.copyright { margin-left: auto; }

/* Taskbar */
.taskbar { flex: none; display: grid; grid-template-columns: 1fr auto 1fr; align-items: center; height: 48px; padding: 0 18px 1px 16px; border-top: 1px solid #45423f; background: #272523; color: #fff; }
.weather { display: flex; align-items: center; gap: 6px; text-align: left; }
.weather svg { margin-bottom: 8px; }
.weather-text { display: flex; flex-direction: column; }
.dim { color: #b9b8b7; }
.apps { display: flex; align-items: center; gap: 4px; padding-left: 4px; }
.app { width: 40px; height: 40px; display: grid; place-items: center; border-radius: 4px; }
.app.running { position: relative; background: #373533; padding: 0 0 4px 5px; }
.app.running::after { content: ""; position: absolute; left: 12px; bottom: 1px; width: 16px; height: 3px; border-radius: 2px; background: #9a9998; }
.task-search { display: flex; align-items: center; gap: 9px; width: 220px; height: 32px; padding: 0 6px 0 11px; border-radius: 16px; background: #454341; border-top: 1px solid #5c5a58; font-size: 13px; color: #d0d0d0; }
.task-search input { flex: 1; width: 0; }
.task-search input::placeholder { color: #cfcfcf; opacity: 1; }
.tray { display: flex; align-items: center; justify-content: flex-end; gap: 16px; }
.lang { width: 28px; text-align: center; }
.status { display: flex; gap: 8px; }
.clock { text-align: right; margin-right: -8px; }
```
